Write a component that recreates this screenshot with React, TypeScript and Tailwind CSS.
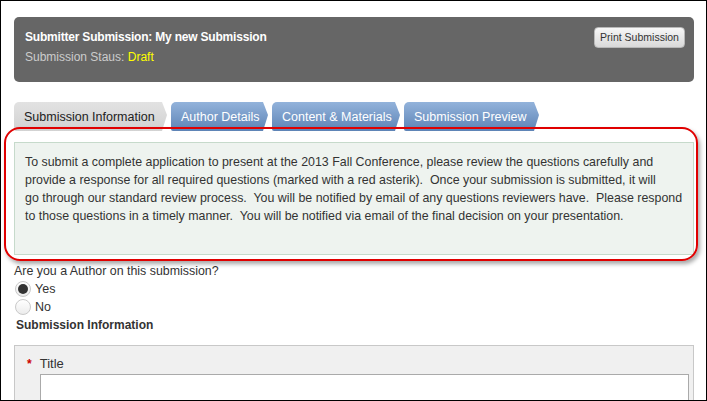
import React from "react";

const tabs = [
  { label: "Submission Information", active: true, w: "w-[153px]" },
  { label: "Author Details", active: false, w: "w-[97px]" },
  { label: "Content & Materials", active: false, w: "w-[128px]" },
  { label: "Submission Preview", active: false, w: "w-[135px]" },
];

const intro = [
  "To submit a complete application to present at the 2013 Fall Conference, please review the questions carefully and",
  "provide a response for all required questions (marked with a red asterik).  Once your submission is submitted, it will",
  "go through our standard review process.  You will be notified by email of any questions reviewers have.  Please respond",
  "to those questions in a timely manner.  You will be notified via email of the final decision on your presentation.",
];

function Radio({ checked, label }: { checked?: boolean; label: string }) {
  return (
    <label className="flex items-center h-[18px] gap-[4px]">
      <span className="w-[16px] h-[16px] rounded-full border border-[#c9c9c9] bg-gradient-to-b from-[#ffffff] to-[#ececec] flex items-center justify-center">
        {checked && <span className="w-[10px] h-[10px] rounded-full bg-[#333333]" />}
      </span>
      <span className="text-[12.5px]">{label}</span>
    </label>
  );
}

export default function App() {
  return (
    <div className="relative w-[707px] h-[401px] overflow-hidden bg-white border border-black font-['Liberation_Sans',Arial,sans-serif] text-[12px] text-[#333333]">
      <div className="pl-[13px] pr-[12px]">
        {/* header */}
        <div className="mt-[16px] h-[65px] rounded-[5px] bg-[#666666] pl-[11px] pr-[9px] flex justify-between">
          <div className="pt-[12px]">
            <div className="font-bold text-white leading-[16px] tracking-[-0.2px]">
              Submitter Submission: My new Submission
            </div>
            <div className="mt-[4px] text-[#cccccc] leading-[16px]">
              Submission Staus: <span className="text-[#ffff00]">Draft</span>
            </div>
          </div>
          <button className="mt-[10px] h-[21px] w-[91px] rounded-[4px] border border-[#b8b8b8] bg-gradient-to-b from-[#f7f7f7] to-[#d9d9d9] text-[10.5px] text-[#333333] leading-none">
            Print Submission
          </button>
        </div>

        {/* tabs */}
        <div className="mt-[20px] flex gap-[4px] h-[29px]">
          {tabs.map((t) => (
            <div
              key={t.label}
              className={`${t.w} h-full rounded-tl-[5px] rounded-bl-[2px] pl-[10px] pt-[1px] flex items-center text-[12.5px] [clip-path:polygon(0_0,calc(100%-5px)_0,100%_45%,calc(100%-5px)_100%,0_100%)] ${
                t.active
                  ? "bg-gradient-to-b from-[#e2e2e2] to-[#d2d2d2] text-[#222222]"
                  : "bg-gradient-to-b from-[#93b3db] to-[#5e84b6] text-white"
              }`}
            >
              {t.label}
            </div>
          ))}
        </div>

        {/* intro box */}
        <div className="mt-[11px] h-[113px] bg-[#eef3ef] border border-[#c6dacb] pl-[10px] pt-[10px] text-[12.4px]">
          {intro.map((line) => (
            <div key={line} className="whitespace-pre leading-[18px]">
              {line}
            </div>
          ))}
        </div>

        {/* author question */}
        <div className="mt-[9px] leading-[14px] text-[12.4px]">Are you a Author on this submission?</div>
        <div className="mt-[2px] pl-[1px]">
          <Radio checked label="Yes" />
          <Radio label="No" />
        </div>
        <div className="mt-[2px] pl-[2px] font-bold leading-[14px]">Submission Information</div>

        {/* form box */}
        <div className="mt-[13px] h-[80px] bg-[#f0f0f0] border border-[#c8c8c8] pl-[12px] pr-[4px] pt-[11px]">
          <div className="flex items-start gap-[8px] leading-[14px]">
            <span className="text-[#cc0000] font-bold">*</span>
            <span className="text-[13px]">Title</span>
          </div>
          <div className="ml-[13px] mt-[3px] h-[40px] bg-white border border-[#aaaaaa]" />
        </div>
      </div>

      {/* red annotation outline */}
      <div className="absolute left-[3px] top-[126px] w-[694px] h-[134px] rounded-[16px] border-2 border-[#e00000] shadow-[2px_3px_4px_rgba(0,0,0,0.35)] pointer-events-none" />
    </div>
  );
}
